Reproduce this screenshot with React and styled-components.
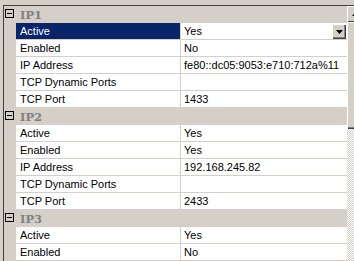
import React from "react";
import styled, { createGlobalStyle } from "styled-components";

const GlobalStyle = createGlobalStyle`
  html, body {
    margin: 0;
    padding: 0;
    background: #d4d0c8;
    overflow: hidden;
  }
  body {
    font-family: "Liberation Sans", Arial, sans-serif;
    font-size: 11px;
  }
`;

// grey window chrome around the grid, clipped by the window edge
const Frame = styled.div`
  padding: 5px 0 0 3px;
  width: 100vw;
  height: 100vh;
  box-sizing: border-box;
  overflow: hidden;
`;

const Grid = styled.div`
  display: flex;
  border-top: 1px solid #404040;
  border-left: 1px solid #404040;
  height: 100%;
  box-sizing: border-box;
  overflow: hidden;
`;

const Rows = styled.div`
  width: 343px;
  flex: none;
  display: flex;
  flex-direction: column;
`;

const Row = styled.div`
  display: grid;
  grid-template-columns: 12px 165px 1fr;
  height: 17px;
  flex: none;
  background: ${(p) => (p.$header ? "#d4d0c8" : "#fff")};
`;

const Margin = styled.div`
  background: #d4d0c8;
`;

const Label = styled.div`
  box-sizing: border-box;
  height: 17px;
  padding-left: 4px;
  line-height: 16px;
  border-right: 1px solid #d4d0c8;
  border-bottom: 1px solid #d4d0c8;
  white-space: nowrap;
  overflow: hidden;
  color: ${(p) => (p.$selected ? "#fff" : "#000")};
  background: ${(p) => (p.$selected ? "#0a246a" : "#fff")};
  background-clip: padding-box;
`;

const Value = styled.div`
  box-sizing: border-box;
  height: 17px;
  display: flex;
  align-items: flex-start;
  padding-left: 3px;
  line-height: 16px;
  border-bottom: 1px solid #d4d0c8;
  color: #000;
  white-space: nowrap;
  overflow: hidden;
`;

const ValueText = styled.span`
  flex: 1;
`;

const DropButton = styled.div`
  width: 14px;
  height: 15px;
  margin: 1px 1px 0 0;
  box-sizing: border-box;
  background: #d4d0c8;
  box-shadow: inset 1px 1px 0 #fff, inset -1px -1px 0 #404040,
    inset -2px -2px 0 #808080;
  display: flex;
  align-items: center;
  justify-content: center;
`;

const GroupCell = styled.div`
  grid-column: 1 / -1;
  display: flex;
  align-items: center;
  height: 17px;
`;

const Toggle = styled.div`
  width: 9px;
  height: 9px;
  margin: 0 0 2px 1px;
  box-sizing: border-box;
  border: 1px solid #000;
  display: flex;
  align-items: center;
  justify-content: center;

  &::after {
    content: "";
    width: 5px;
    height: 1px;
    background: #000;
  }
`;

const GroupName = styled.span`
  margin-left: 6px;
  font-family: "DejaVu Serif", "Liberation Serif", serif;
  font-weight: bold;
  font-size: 11.5px;
  color: #808080;
`;

// right scrollbar, mostly cut off by the window edge
const Scrollbar = styled.div`
  width: 17px;
  flex: none;
  display: flex;
  flex-direction: column;
`;

const ScrollButton = styled.div`
  height: 16px;
  flex: none;
  box-sizing: border-box;
  background: #d4d0c8;
  box-shadow: inset 1px 1px 0 #fff, inset -1px -1px 0 #404040;
  display: flex;
  align-items: center;
  justify-content: center;
`;

const Thumb = styled.div`
  height: 107px;
  flex: none;
  background: #d4d0c8;
  box-shadow: inset 1px 1px 0 #fff, inset -1px -1px 0 #404040,
    inset -2px -2px 0 #808080;
`;

const Track = styled.div`
  flex: 1;
  background: repeating-conic-gradient(#d4d0c8 0 25%, #fff 0 50%) 0 0 / 2px
    2px;
`;

const Arrow = ({ up }) => (
  <svg width="7" height="4" viewBox="0 0 7 4">
    <path d={up ? "M3.5 0 L7 4 L0 4 Z" : "M0 0 L7 0 L3.5 4 Z"} fill="#000" />
  </svg>
);

const groups = [
  {
    name: "IP1",
    props: [
      ["Active", "Yes"],
      ["Enabled", "No"],
      ["IP Address", "fe80::dc05:9053:e710:712a%11"],
      ["TCP Dynamic Ports", ""],
      ["TCP Port", "1433"],
    ],
  },
  {
    name: "IP2",
    props: [
      ["Active", "Yes"],
      ["Enabled", "Yes"],
      ["IP Address", "192.168.245.82"],
      ["TCP Dynamic Ports", ""],
      ["TCP Port", "2433"],
    ],
  },
  {
    name: "IP3",
    props: [
      ["Active", "Yes"],
      ["Enabled", "No"],
    ],
  },
];

export default function App() {
  return (
    <>
      <GlobalStyle />
      <Frame>
        <Grid>
          <Rows>
            {groups.map((g, gi) => (
              <React.Fragment key={g.name}>
                <Row $header>
                  <GroupCell>
                    <Toggle />
                    <GroupName>{g.name}</GroupName>
                  </GroupCell>
                </Row>
                {g.props.map(([label, value], i) => {
                  const selected = gi === 0 && i === 0;
                  return (
                    <Row key={label}>
                      <Margin />
                      <Label $selected={selected}>{label}</Label>
                      <Value>
                        <ValueText>{value}</ValueText>
                        {selected && (
                          <DropButton>
                            <Arrow />
                          </DropButton>
                        )}
                      </Value>
                    </Row>
                  );
                })}
              </React.Fragment>
            ))}
          </Rows>
          <Scrollbar>
            <ScrollButton>
              <Arrow up />
            </ScrollButton>
            <Thumb />
            <Track />
          </Scrollbar>
        </Grid>
      </Frame>
    </>
  );
}
